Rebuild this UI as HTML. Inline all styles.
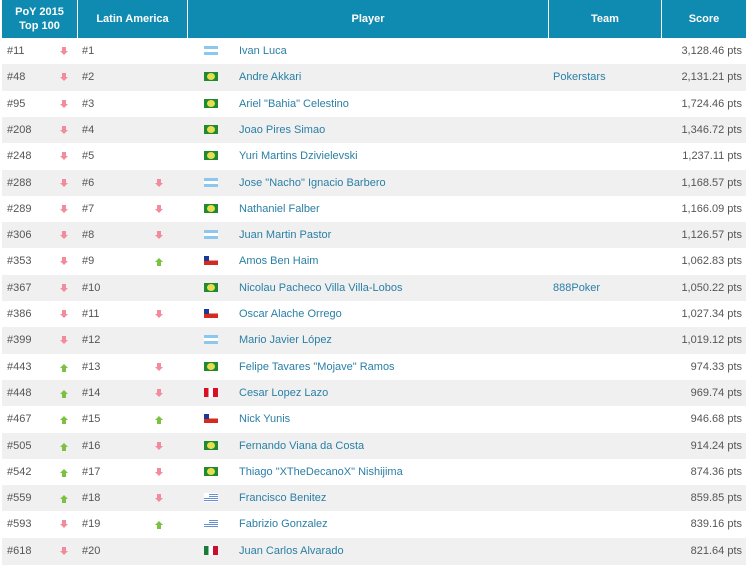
<!DOCTYPE html><html><head><style>
body{margin:0;width:755px;height:564px;overflow:hidden;background:#fff;font-family:"Liberation Sans",sans-serif;font-size:11px;color:#555}
.hd{position:absolute;top:0;left:2px;width:744px;height:38px;background:#0f8ab0;color:#fff;font-weight:bold}
.hd div{position:absolute;top:0;height:38px;display:flex;align-items:center;justify-content:center;text-align:center;line-height:14px;border-right:1px solid #fff;box-sizing:border-box}
.r{position:absolute;left:2px;width:744px;height:27px;line-height:26px;background:#fff}
.r span{position:absolute;top:0}
.a{left:5px}.b{left:80px}.t{left:551px;color:#2a7fa6}.s{right:4px}
.p{left:237px;color:#2a7fa6}
.ar{position:absolute;top:10px;width:0;height:0}
.dn{border-left:4px solid transparent;border-right:4px solid transparent;border-top:4px solid #f28b9c}
.dn::before{content:"";position:absolute;left:-2px;top:-8px;width:4px;height:4px;background:#f28b9c}
.up{border-left:4px solid transparent;border-right:4px solid transparent;border-bottom:4px solid #7cc242;top:10px}
.up::after{content:"";position:absolute;left:-2px;top:4px;width:4px;height:4px;background:#7cc242}
.f{position:absolute;left:202px;top:8px;width:14px;height:9px}
.AR{background:linear-gradient(#8cc8ee 33%,#fff 33%,#fff 66%,#8cc8ee 66%)}
.BR{background:#1f8a30;}
.BR::after{content:"";position:absolute;left:3px;top:1px;width:8px;height:7px;background:#e8dc50;border-radius:50%}
.CL{background:linear-gradient(#fff 50%,#d52b1e 50%)}
.CL::after{content:"";position:absolute;left:0;top:0;width:5px;height:4.5px;background:#1a3a9a}
.PE{background:linear-gradient(90deg,#d91023 33%,#fff 33%,#fff 66%,#d91023 66%)}
.MX{background:linear-gradient(90deg,#1a7a3a 33%,#fff 33%,#fff 66%,#c8102e 66%)}
.UY{background:repeating-linear-gradient(#fff 0 1px,#6a8fd0 1px 2px)}
.UY::after{content:"";position:absolute;left:0;top:0;width:5px;height:4px;background:#fff}
</style></head><body>
<div class="hd">
<div style="left:0;width:76px">PoY 2015<br>Top 100</div>
<div style="left:76px;width:110px">Latin America</div>
<div style="left:186px;width:361px">Player</div>
<div style="left:547px;width:113px">Team</div>
<div style="left:660px;width:84px;border:none">Score</div>
</div>
<div id="t" style="position:absolute;top:38px;left:0"></div>
<script>
var d=[["#11","d","#1","","AR","Ivan Luca","","3,128.46"],["#48","d","#2","","BR","Andre Akkari","Pokerstars","2,131.21"],["#95","d","#3","","BR","Ariel \"Bahia\" Celestino","","1,724.46"],["#208","d","#4","","BR","Joao Pires Simao","","1,346.72"],["#248","d","#5","","BR","Yuri Martins Dzivielevski","","1,237.11"],["#288","d","#6","d","AR","Jose \"Nacho\" Ignacio Barbero","","1,168.57"],["#289","d","#7","d","BR","Nathaniel Falber","","1,166.09"],["#306","d","#8","d","AR","Juan Martin Pastor","","1,126.57"],["#353","d","#9","u","CL","Amos Ben Haim","","1,062.83"],["#367","d","#10","","BR","Nicolau Pacheco Villa Villa-Lobos","888Poker","1,050.22"],["#386","d","#11","d","CL","Oscar Alache Orrego","","1,027.34"],["#399","d","#12","","AR","Mario Javier López","","1,019.12"],["#443","u","#13","d","BR","Felipe Tavares \"Mojave\" Ramos","","974.33"],["#448","u","#14","d","PE","Cesar Lopez Lazo","","969.74"],["#467","u","#15","u","CL","Nick Yunis","","946.68"],["#505","u","#16","d","BR","Fernando Viana da Costa","","914.24"],["#542","u","#17","d","BR","Thiago \"XTheDecanoX\" Nishijima","","874.36"],["#559","u","#18","d","UY","Francisco Benitez","","859.85"],["#593","d","#19","u","UY","Fabrizio Gonzalez","","839.16"],["#618","d","#20","","MX","Juan Carlos Alvarado","","821.64"]];
var h="";
function ar(c,x){return c?'<i class="ar '+(c=="d"?"dn":"up")+'" style="left:'+x+'px;'+(c=="d"?"top:13px":"")+'"></i>':""}
d.forEach(function(r,i){h+='<div class="r" style="top:'+Math.round(i*26.3)+'px;z-index:'+i+';'+(i%2?'background:#f0f0f0':'')+'"><span class="a">'+r[0]+'</span>'+ar(r[1],58)+'<span class="b">'+r[2]+'</span>'+ar(r[3],153)+'<i class="f '+r[4]+'"></i><span class="p">'+r[5]+'</span><span class="t">'+r[6]+'</span><span class="s">'+r[7]+' pts</span></div>'});
document.getElementById("t").innerHTML=h;
</script>
</body></html>
